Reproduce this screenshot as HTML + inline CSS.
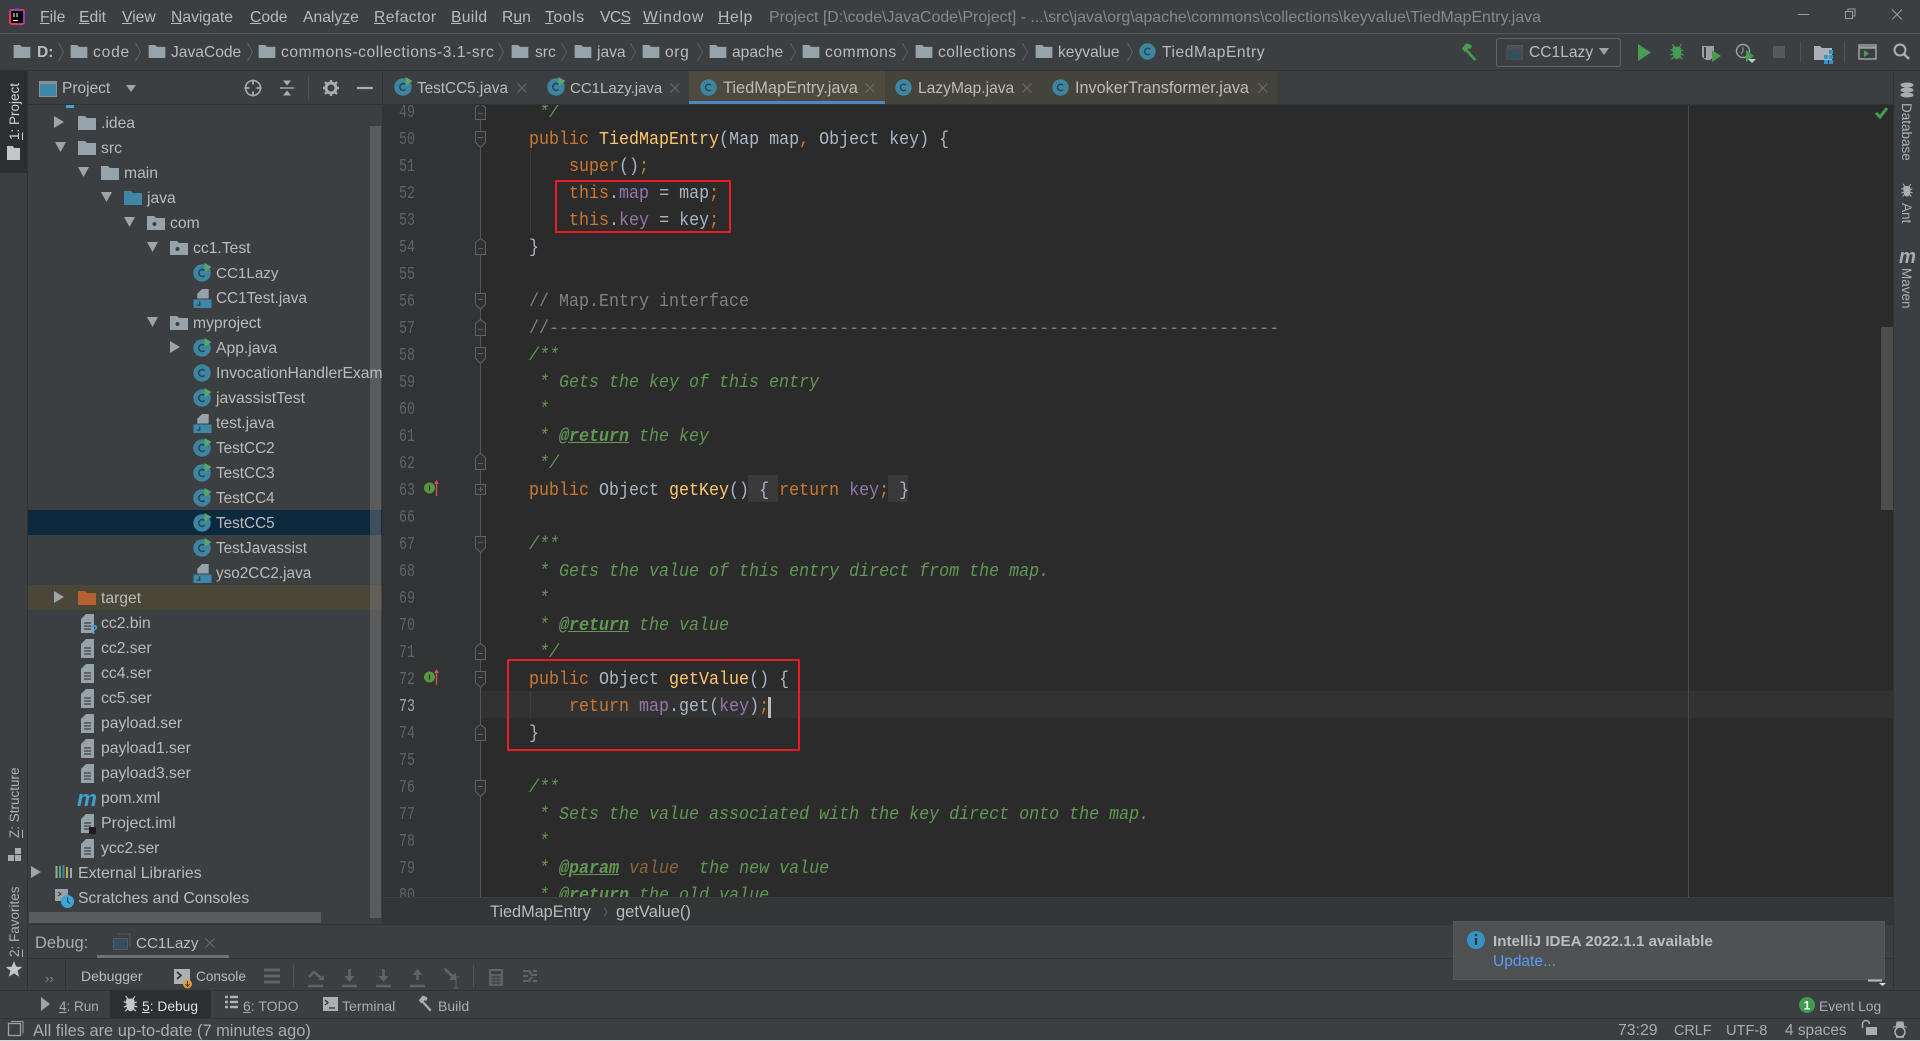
<!DOCTYPE html>
<html><head><meta charset="utf-8"><style>
html,body{margin:0;padding:0;width:1920px;height:1041px;overflow:hidden;background:#3c3f41}
body{position:relative;font-family:"Liberation Sans",sans-serif;color:#bbb}
.b{position:absolute}
.t{position:absolute;white-space:pre;font-size:15.7px;line-height:25px;height:25px;color:#bbb;margin-top:1px}
.m{top:4px;font-size:15.7px}
.n{top:39px;font-size:15.6px}
.tb{top:75px;font-size:15.3px}
.s{top:1018px;font-size:14.6px;line-height:24px;color:#a9adb0}
.u{text-decoration:underline}
.v{position:absolute;writing-mode:vertical-rl;transform:rotate(180deg);white-space:pre;font-size:13.5px;line-height:16px;color:#aeb0b2}
.r{writing-mode:vertical-rl;transform:none}
pre{margin:0;position:absolute;font-family:"Liberation Mono",monospace;font-size:18px;line-height:27px;white-space:pre;transform-origin:0 0}
.k{color:#cc7832}.f{color:#9876aa}.y{color:#ffc66d}.g{color:#808080}
.d{color:#629755;font-style:italic}.a{color:#629755;font-style:italic;font-weight:bold;text-decoration:underline}.pv{color:#8a653b;font-style:italic}
svg.o{position:absolute;left:0;top:0}
</style></head><body>
<svg width="0" height="0" style="position:absolute"><defs>
<symbol id="fo" viewBox="0 0 18 14"><path d="M0 0h7l2 2h9v12H0z" fill="#97a3ab"/></symbol>
<symbol id="fb" viewBox="0 0 18 14"><path d="M0 0h7l2 2h9v12H0z" fill="#3f87a6"/></symbol>
<symbol id="fr" viewBox="0 0 18 14"><path d="M0 0h7l2 2h9v12H0z" fill="#b5602f"/></symbol>
<symbol id="pk" viewBox="0 0 18 14"><path d="M0 0h7l2 2h9v12H0z" fill="#97a3ab"/><circle cx="7.5" cy="8" r="2" fill="#3c3f41"/></symbol>
<symbol id="cl" viewBox="0 0 18 18"><circle cx="9" cy="9" r="8.7" fill="#3e86a0"/><path d="M11.6 6.6A3.4 3.4 0 1 0 11.6 11.4" fill="none" stroke="#23485a" stroke-width="1.6"/></symbol>
<symbol id="cr" viewBox="0 0 19 19"><circle cx="9" cy="10" r="8.7" fill="#3e86a0"/><path d="M11.6 7.6A3.4 3.4 0 1 0 11.6 12.4" fill="none" stroke="#23485a" stroke-width="1.6"/><path d="M11.5 0l7 4-7 5z" fill="#59a869"/></symbol>
<symbol id="fj" viewBox="0 0 19 20"><path d="M9 0h7v10H4V5z" fill="#97a3ab"/><path d="M0 11h19v9H0z" fill="#3f87a6"/><path d="M6.5 13v4H3.5" stroke="#23485a" stroke-width="1.4" fill="none"/></symbol>
<symbol id="ft" viewBox="0 0 13 19"><path d="M5 0h8v19H0V5z" fill="#97a3ab"/><path d="M3 9h7M3 12h7M3 15h7" stroke="#3c3f41" stroke-width="1.2"/></symbol>
<symbol id="ar" viewBox="0 0 10 12"><path d="M0 0l10 6-10 6z" fill="#9ea4a8"/></symbol>
<symbol id="ad" viewBox="0 0 11 10"><path d="M0 0h11l-5.500 10z" fill="#9ea4a8"/></symbol>
<symbol id="x" viewBox="0 0 10 10"><path d="M.5.500l9 9M9.500.500l-9 9" stroke="#686b6e" stroke-width="1.100" fill="none"/></symbol>
<symbol id="ch" viewBox="0 0 6 20"><path d="M.5 1l5 9-5 9" stroke="#5c6063" stroke-width="1" fill="none"/></symbol>
<symbol id="ft1" viewBox="0 0 11 17"><path d="M.5 16.500V4.500L5.500.500l5 4v12z" stroke="#606366" fill="#2f3133"/><path d="M3 10.500h5" stroke="#606366"/></symbol>
<symbol id="ft2" viewBox="0 0 11 17"><path d="M.5.500h10v11l-5 5-5-5z" stroke="#606366" fill="#2f3133"/><path d="M3 6.500h5" stroke="#606366"/></symbol>
<symbol id="ft3" viewBox="0 0 11 11"><path d="M.5.500h10v10H.5z" stroke="#606366" fill="#2f3133"/><path d="M3 5.500h5M5.500 3v5" stroke="#606366"/></symbol>
<symbol id="ov" viewBox="0 0 16 18"><circle cx="5.500" cy="9" r="5.500" fill="#57963f"/><path d="M5.500 6.500v5" stroke="#2b2b2b" stroke-width="1.200"/><path d="M12.500 17V4" stroke="#c75450" stroke-width="1.300"/><path d="M10 5l2.500-4 2.500 4z" fill="#c75450"/></symbol>
<symbol id="ham" viewBox="0 0 20 20"><path d="M1 6L6 0l5 2 1 2-2 3-2-1-1 1 10 11-2 2L5 9 4 10z" fill="currentColor"/></symbol>
<symbol id="bug" viewBox="0 0 16 20"><path d="M3.500 1l2 3h5l2-3 1 .7-2 3 1 1.300v2l2.500-1v1.500L12.500 9.500v2L15.500 12.500V14l-3.200-1 -.3 2 2.500 2.500-1 1-2.200-2.200C10 17.500 9 18 8 18s-2-.5-3.300-1.700L2.500 18.500l-1-1L4 15l-.3-2L.5 14v-1.500l3-1v-2L.5 8V6.500L3 7.500v-2l1-1.300-2-3z" fill="currentColor"/></symbol>
</defs></svg>

<!-- structural backgrounds -->
<div class="b" style="left:0;top:33px;width:1920px;height:1px;background:#54585b"></div>
<div class="b" style="left:0;top:70px;width:1920px;height:1px;background:#323232"></div>
<div class="b" style="left:0;top:71px;width:28px;height:102px;background:#2c2e30"></div>
<div class="b" style="left:27px;top:71px;width:1px;height:919px;background:#323232"></div>
<div class="b" style="left:28px;top:104px;width:1865px;height:1px;background:#323232"></div>
<div class="b" style="left:382px;top:71px;width:1px;height:853px;background:#323232"></div>
<div class="b" style="left:28px;top:510px;width:354px;height:25px;background:#0d293e"></div>
<div class="b" style="left:28px;top:585px;width:354px;height:25px;background:#4a4638"></div>
<div class="b" style="left:66px;top:105px;width:8px;height:3px;background:#3fa5d4"></div>

<!-- tabs -->
<div class="b" style="left:689px;top:71px;width:196px;height:30px;background:#4e4a3e"></div>
<div class="b" style="left:689px;top:101px;width:196px;height:3px;background:#4a88c7"></div>
<div class="b" style="left:885px;top:71px;width:392px;height:33px;background:#45443c"></div>

<!-- editor -->
<div class="b" style="left:383px;top:105px;width:1510px;height:792px;background:#2b2b2b;overflow:hidden">
  <div class="b" style="left:0;top:0;width:97px;height:792px;background:#313335"></div>
  <div class="b" style="left:97px;top:586px;width:1413px;height:27px;background:#323232"></div>
  <div class="b" style="left:1305px;top:0;width:1px;height:792px;background:#4a4a4a"></div>
  <div class="b" style="left:97px;top:0;width:1px;height:792px;background:#555"></div>
  <div class="b" style="left:147px;top:45px;width:1px;height:83px;background:#3c3c3c"></div>
  <div class="b" style="left:147px;top:586px;width:1px;height:27px;background:#3c3c3c"></div>
  <div class="b" style="left:365px;top:370px;width:30px;height:27px;background:#3a3a3a"></div>
  <div class="b" style="left:505px;top:370px;width:20px;height:27px;background:#3a3a3a"></div>
  <div class="b" style="left:1498px;top:222px;width:12px;height:183px;background:#4d4d4d"></div>
  <pre style="left:16px;top:-5.5px;color:#606366;transform:scaleX(.74)">49
50
51
52
53
54
55
56
57
58
59
60
61
62
63
66
67
68
69
70
71
72
<span style="color:#a4a3a3">73</span>
74
75
76
77
78
79
80</pre>
  <pre style="left:146px;top:-5.5px;color:#a9b7c6;transform:scaleX(.926);width:1600px"><span class="d"> */</span>
<span class="k">public</span> <span class="y">TiedMapEntry</span>(Map map<span class="k">,</span> Object key) {
    <span class="k">super</span>()<span class="k">;</span>
    <span class="k">this</span>.<span class="f">map</span> = map<span class="k">;</span>
    <span class="k">this</span>.<span class="f">key</span> = key<span class="k">;</span>
}

<span class="g">// Map.Entry interface</span>
<span class="g">//-------------------------------------------------------------------------</span>
<span class="d">/**</span>
<span class="d"> * Gets the key of this entry</span>
<span class="d"> *</span>
<span class="d"> * </span><span class="a">@return</span><span class="d"> the key</span>
<span class="d"> */</span>
<span class="k">public</span> Object <span class="y">getKey</span>() { <span class="k">return</span> <span class="f">key</span><span class="k">;</span> }

<span class="d">/**</span>
<span class="d"> * Gets the value of this entry direct from the map.</span>
<span class="d"> *</span>
<span class="d"> * </span><span class="a">@return</span><span class="d"> the value</span>
<span class="d"> */</span>
<span class="k">public</span> Object <span class="y">getValue</span>() {
    <span class="k">return</span> <span class="f">map</span>.get(<span class="f">key</span>)<span class="k">;</span>
}

<span class="d">/**</span>
<span class="d"> * Sets the value associated with the key direct onto the map.</span>
<span class="d"> *</span>
<span class="d"> * </span><span class="a">@param</span> <span class="pv">value</span><span class="d">  the new value</span>
<span class="d"> * </span><span class="a">@return</span><span class="d"> the old value</span></pre>
  <div class="b" style="left:385px;top:592px;width:3px;height:21px;background:#bbb"></div>
  <svg class="o" width="1510" height="792" viewBox="383 105 1510 792" style="overflow:hidden">
    <use href="#ft1" x="475" y="103" width="11" height="17"/>
    <use href="#ft2" x="475" y="131" width="11" height="17"/>
    <use href="#ft1" x="475" y="238" width="11" height="17"/>
    <use href="#ft2" x="475" y="293" width="11" height="17"/>
    <use href="#ft1" x="475" y="319" width="11" height="17"/>
    <use href="#ft2" x="475" y="347" width="11" height="17"/>
    <use href="#ft1" x="475" y="453" width="11" height="17"/>
    <use href="#ft3" x="475" y="484" width="11" height="11"/>
    <use href="#ft2" x="475" y="536" width="11" height="17"/>
    <use href="#ft1" x="475" y="643" width="11" height="17"/>
    <use href="#ft2" x="475" y="671" width="11" height="17"/>
    <use href="#ft1" x="475" y="724" width="11" height="17"/>
    <use href="#ft2" x="475" y="780" width="11" height="17"/>
    <use href="#ov" x="424" y="479" width="16" height="18"/>
    <use href="#ov" x="424" y="668" width="16" height="18"/>
    <path d="M1876 113l4 4 7-9" stroke="#499c54" stroke-width="3" fill="none"/>
    <rect x="556" y="181" width="174" height="51" fill="none" stroke="#ed1c24" stroke-width="2"/>
    <rect x="508" y="660" width="291" height="90" fill="none" stroke="#ed1c24" stroke-width="2"/>
  </svg>
</div>

<!-- breadcrumb -->
<div class="b" style="left:383px;top:897px;width:1510px;height:27px;background:#333537;border-top:1px solid #3c3e40;box-sizing:border-box"></div>
<div class="b" style="left:28px;top:924px;width:1865px;height:1px;background:#323232"></div>

<!-- debug dividers -->
<div class="b" style="left:28px;top:958px;width:1865px;height:1px;background:#323232"></div>
<div class="b" style="left:97px;top:955px;width:132px;height:3px;background:#6c7074"></div>
<div class="b" style="left:0;top:990px;width:1920px;height:1px;background:#323232"></div>
<div class="b" style="left:110px;top:991px;width:101px;height:27px;background:#2c2e30"></div>
<div class="b" style="left:0;top:1018px;width:1920px;height:1px;background:#323232"></div>
<div class="b" style="left:0;top:1040px;width:1920px;height:1px;background:#d8d8d8"></div>
<div class="b" style="left:65px;top:959px;width:1px;height:31px;background:#323232"></div>
<div class="b" style="left:293px;top:965px;width:1px;height:22px;background:#515456"></div>
<div class="b" style="left:473px;top:965px;width:1px;height:22px;background:#515456"></div>
<div class="b" style="left:1893px;top:71px;width:1px;height:919px;background:#323232"></div>

<!-- scrollbars -->
<div class="b" style="left:370px;top:126px;width:11px;height:792px;background:rgba(130,132,134,.42)"></div>
<div class="b" style="left:29px;top:912px;width:292px;height:11px;background:#595b5d"></div>

<!-- menu -->
<span class="t m" style="left:40px"><span class="u">F</span>ile</span>
<span class="t m" style="left:79px"><span class="u">E</span>dit</span>
<span class="t m" style="left:122px"><span class="u">V</span>iew</span>
<span class="t m" style="left:171px"><span class="u">N</span>avigate</span>
<span class="t m" style="left:250px"><span class="u">C</span>ode</span>
<span class="t m" style="left:303px">Analy<span class="u">z</span>e</span>
<span class="t m" style="left:374px;letter-spacing:.4px"><span class="u">R</span>efactor</span>
<span class="t m" style="left:451px;letter-spacing:.3px"><span class="u">B</span>uild</span>
<span class="t m" style="left:502px">R<span class="u">u</span>n</span>
<span class="t m" style="left:545px;letter-spacing:.6px"><span class="u">T</span>ools</span>
<span class="t m" style="left:600px;letter-spacing:-.6px">VC<span class="u">S</span></span>
<span class="t m" style="left:643px;letter-spacing:.9px"><span class="u">W</span>indow</span>
<span class="t m" style="left:718px;letter-spacing:.7px"><span class="u">H</span>elp</span>
<span class="t m" style="left:769px;color:#858a8d;font-size:15.9px">Project [D:\code\JavaCode\Project] - ...\src\java\org\apache\commons\collections\keyvalue\TiedMapEntry.java</span>

<!-- nav -->
<span class="t n" style="left:37px;font-weight:bold">D:</span>
<span class="t n" style="left:93px;letter-spacing:.8px">code</span>
<span class="t n" style="left:171px">JavaCode</span>
<span class="t n" style="left:281px;letter-spacing:.55px">commons-collections-3.1-src</span>
<span class="t n" style="left:535px">src</span>
<span class="t n" style="left:597px">java</span>
<span class="t n" style="left:665px;letter-spacing:.6px">org</span>
<span class="t n" style="left:732px">apache</span>
<span class="t n" style="left:825px;letter-spacing:.6px">commons</span>
<span class="t n" style="left:938px;letter-spacing:.5px">collections</span>
<span class="t n" style="left:1058px">keyvalue</span>
<span class="t n" style="left:1162px;letter-spacing:.55px">TiedMapEntry</span>
<div class="b" style="left:1496px;top:38px;width:123px;height:27px;border:1px solid #646464;border-radius:3px;background:#3c3f41"></div>
<span class="t n" style="left:1529px">CC1Lazy</span>

<!-- project header -->
<span class="t" style="left:62px;top:75px;font-size:15.5px">Project</span>

<!-- tree -->
<span class="t" style="left:101px;top:110px">.idea</span>
<span class="t" style="left:101px;top:135px">src</span>
<span class="t" style="left:124px;top:160px">main</span>
<span class="t" style="left:147px;top:185px">java</span>
<span class="t" style="left:170px;top:210px">com</span>
<span class="t" style="left:193px;top:235px">cc1.Test</span>
<span class="t" style="left:216px;top:260px;font-size:15.200px">CC1Lazy</span>
<span class="t" style="left:216px;top:285px;font-size:15.300px">CC1Test.java</span>
<span class="t" style="left:193px;top:310px">myproject</span>
<span class="t" style="left:216px;top:335px">App.java</span>
<span class="t" style="left:216px;top:360px;width:166px;overflow:hidden">InvocationHandlerExample</span>
<span class="t" style="left:216px;top:385px">javassistTest</span>
<span class="t" style="left:216px;top:410px">test.java</span>
<span class="t" style="left:216px;top:435px;font-size:15.300px">TestCC2</span>
<span class="t" style="left:216px;top:460px;font-size:15.300px">TestCC3</span>
<span class="t" style="left:216px;top:485px;font-size:15.300px">TestCC4</span>
<span class="t" style="left:216px;top:510px;font-size:15.300px">TestCC5</span>
<span class="t" style="left:216px;top:535px;font-size:15.300px">TestJavassist</span>
<span class="t" style="left:216px;top:560px;font-size:15.300px">yso2CC2.java</span>
<span class="t" style="left:101px;top:585px">target</span>
<span class="t" style="left:101px;top:610px">cc2.bin</span>
<span class="t" style="left:101px;top:635px">cc2.ser</span>
<span class="t" style="left:101px;top:660px">cc4.ser</span>
<span class="t" style="left:101px;top:685px">cc5.ser</span>
<span class="t" style="left:101px;top:710px">payload.ser</span>
<span class="t" style="left:101px;top:735px">payload1.ser</span>
<span class="t" style="left:101px;top:760px">payload3.ser</span>
<span class="t" style="left:101px;top:785px">pom.xml</span>
<span class="t" style="left:101px;top:810px;font-size:16px">Project.iml</span>
<span class="t" style="left:101px;top:835px">ycc2.ser</span>
<span class="t" style="left:78px;top:860px;font-size:15.900px">External Libraries</span>
<span class="t" style="left:78px;top:885px;font-size:15.800px">Scratches and Consoles</span>

<!-- tabs text -->
<span class="t tb" style="left:417px">TestCC5.java</span>
<span class="t tb" style="left:570px;font-size:15px">CC1Lazy.java</span>
<span class="t tb" style="left:723px;font-size:16.400px">TiedMapEntry.java</span>
<span class="t tb" style="left:918px;font-size:15.600px">LazyMap.java</span>
<span class="t tb" style="left:1075px;font-size:16.200px">InvokerTransformer.java</span>

<!-- breadcrumb text -->
<span class="t" style="left:490px;top:899px;font-size:16.300px">TiedMapEntry</span>
<span class="t" style="left:616px;top:899px;font-size:16.500px">getValue()</span>

<!-- debug text -->
<span class="t" style="left:35px;top:930px;font-size:16.500px;color:#aaadb0">Debug:</span>
<span class="t" style="left:136px;top:930px;font-size:15.200px">CC1Lazy</span>
<span class="t" style="left:81px;top:963px;font-size:14px">Debugger</span>
<span class="t" style="left:196px;top:963px;font-size:13.600px">Console</span>
<span class="t" style="left:45px;top:965px;font-size:13px;color:#888">››</span>

<!-- bottom stripe -->
<span class="t" style="left:59px;top:993px;font-size:13.500px;color:#a9adb0"><span class="u">4</span>: Run</span>
<span class="t" style="left:142px;top:993px;font-size:13.800px;color:#dfe1e3"><span class="u">5</span>: Debug</span>
<span class="t" style="left:243px;top:993px;font-size:14px;color:#a9adb0"><span class="u">6</span>: TODO</span>
<span class="t" style="left:342px;top:993px;font-size:14.100px;color:#a9adb0">Terminal</span>
<span class="t" style="left:438px;top:993px;font-size:14px;color:#a9adb0">Build</span>
<span class="t" style="left:1819px;top:993px;font-size:13.800px;color:#a9adb0">Event Log</span>

<!-- status -->
<span class="t s" style="left:33px;font-size:16.400px">All files are up-to-date (7 minutes ago)</span>
<span class="t s" style="left:1618px;font-size:15.800px">73:29</span>
<span class="t s" style="left:1674px;font-size:14.400px">CRLF</span>
<span class="t s" style="left:1726px">UTF-8</span>
<span class="t s" style="left:1785px;font-size:15.400px">4 spaces</span>

<!-- stripes -->
<div class="v" style="left:7px;top:82px;height:58px;color:#d0d2d4"><span class="u">1</span>: Project</div>
<div class="v" style="left:7px;top:767px;height:71px"><span class="u">Z</span>: Structure</div>
<div class="v" style="left:7px;top:888px;height:69px"><span class="u">2</span>: Favorites</div>
<div class="v r" style="left:1898px;top:103px">Database</div>
<div class="v r" style="left:1898px;top:203px">Ant</div>
<div class="v r" style="left:1898px;top:268px">Maven</div>

<!-- notification -->
<div class="b" style="left:1453px;top:921px;width:432px;height:59px;background:#4f5153;border:1px solid #56585a;box-sizing:border-box"></div>
<span class="t" style="left:1493px;top:928px;font-size:15.200px;font-weight:bold;color:#bcbdbe">IntelliJ IDEA 2022.1.1 available</span>
<span class="t" style="left:1493px;top:948px;font-size:15.500px;color:#589df6">Update...</span>

<!-- icons -->
<svg class="o" width="1920" height="1041" viewBox="0 0 1920 1041">
  <!-- logo -->
  <rect x="9" y="9" width="16" height="16" rx="3" fill="#fe315d"/><path d="M9 12l8-4 8 5v9l-7 3z" fill="#5a4cd8" opacity=".8"/><rect x="11" y="11" width="12" height="12" fill="#000"/><path d="M13 20.500h5" stroke="#fff"/><path d="M14 13v4M17 13v4" stroke="#fff"/>
  <!-- window controls -->
  <path d="M1798 14.500h11" stroke="#9a9da0"/><path d="M1845.500 11.500h7v7h-7zM1848 11.500v-2.500h7v7h-2.500" fill="none" stroke="#9a9da0"/>
  <path d="M1892 9.500l10 10M1902 9.500l-10 10" stroke="#9a9da0"/>
  <!-- nav folders -->
  <use href="#fo" x="13" y="45" width="18" height="13"/><use href="#fo" x="70" y="45" width="18" height="13"/><use href="#fo" x="148" y="45" width="18" height="13"/><use href="#fo" x="258" y="45" width="18" height="13"/><use href="#fo" x="511" y="45" width="18" height="13"/><use href="#fo" x="574" y="45" width="18" height="13"/><use href="#fo" x="642" y="45" width="18" height="13"/><use href="#fo" x="709" y="45" width="18" height="13"/><use href="#fo" x="802" y="45" width="18" height="13"/><use href="#fo" x="915" y="45" width="18" height="13"/><use href="#fo" x="1035" y="45" width="18" height="13"/>
  <use href="#cl" x="1139" y="43" width="17" height="17"/>
  <use href="#ch" x="58" y="42" width="6" height="20"/><use href="#ch" x="135" y="42" width="6" height="20"/><use href="#ch" x="247" y="42" width="6" height="20"/><use href="#ch" x="498" y="42" width="6" height="20"/><use href="#ch" x="561" y="42" width="6" height="20"/><use href="#ch" x="630" y="42" width="6" height="20"/><use href="#ch" x="697" y="42" width="6" height="20"/><use href="#ch" x="790" y="42" width="6" height="20"/><use href="#ch" x="902" y="42" width="6" height="20"/><use href="#ch" x="1022" y="42" width="6" height="20"/><use href="#ch" x="1127" y="42" width="6" height="20"/>
  <!-- run toolbar -->
  <use href="#ham" x="1460" y="43" width="20" height="18" style="color:#499c54"/>
  <path d="M1507 45h16v15h-16z" fill="#4c5052"/><path d="M1506.500 49.500h15v10h-15z" fill="#34505e" stroke="#4b4e50"/><path d="M1510 45.500h12v3" stroke="#55585a" fill="none"/>
  <path d="M1599 48h10l-5 7z" fill="#9ea4a8"/>
  <path d="M1638 44l13 8.500-13 8.500z" fill="#499c54"/>
  <use href="#bug" x="1669" y="43" width="16" height="18" style="color:#499c54"/>
  <path d="M1702 46h12v11l-4 3h-4l-4-3z" fill="#9aa1a5"/><path d="M1705 47v11" stroke="#3c3f41" stroke-width="2"/><path d="M1712 50l9 6-9 6z" fill="#499c54"/>
  <circle cx="1743" cy="51" r="6.500" fill="none" stroke="#9aa1a5" stroke-width="1.400"/><path d="M1743 47v4l-2 3" stroke="#9aa1a5" fill="none"/><path d="M1746 50l8 6-8 6z" fill="#499c54"/><path d="M1748 59h8l-4 4z" fill="#ccc"/>
  <rect x="1773" y="46" width="12" height="12" fill="#56585a"/>
  <path d="M1800.500 41v22M1844.500 41v22" stroke="#4f5254"/>
  <path d="M1814 46h6l2 2h10v12h-18z" fill="#aab0b5"/><rect x="1824" y="55" width="4" height="4" fill="#3592c4"/><rect x="1829" y="55" width="4" height="4" fill="#3592c4"/><rect x="1829" y="50" width="4" height="4" fill="#3592c4"/><rect x="1824" y="60" width="4" height="4" fill="#3592c4"/><rect x="1829" y="60" width="4" height="4" fill="#3592c4"/>
  <rect x="1859" y="45" width="17" height="14" fill="none" stroke="#9aa1a5" stroke-width="1.500"/><path d="M1859 47.500h17" stroke="#9aa1a5" stroke-width="2.500"/><path d="M1864 50l5 3.500-5 3.500z" fill="#499c54"/>
  <circle cx="1900" cy="50" r="5.500" fill="none" stroke="#afb1b3" stroke-width="2"/><path d="M1904 54l5 5" stroke="#afb1b3" stroke-width="2.400"/>
  <!-- project header -->
  <rect x="39.500" y="81.500" width="17" height="15" fill="#3f87a6" stroke="#8a9196"/>
  <path d="M39 83h18" stroke="#8a9196" stroke-width="2"/>
  <path d="M126 85h10l-5 7z" fill="#9ea4a8"/>
  <circle cx="253" cy="88" r="7.500" fill="none" stroke="#a9adb0" stroke-width="1.600"/><path d="M253 79.500v5M253 91.500v5M244.500 88h5M256.500 88h5" stroke="#a9adb0" stroke-width="1.800"/>
  <path d="M280 88h14" stroke="#a9adb0" stroke-width="1.400"/><path d="M283 80.500h8l-4 5zM283 95.500h8l-4-5z" fill="#a9adb0"/>
  <path d="M308.500 76v24" stroke="#4f5254"/>
  <circle cx="331" cy="88" r="5" fill="none" stroke="#a9adb0" stroke-width="3"/><path d="M331 80v3M331 93v3M323 88h3M336 88h3M325 82l2 2M335 92l2 2M325 94l2-2M335 84l2-2" stroke="#a9adb0" stroke-width="2.400"/>
  <path d="M357 88h16" stroke="#a9adb0" stroke-width="2.200"/>
  <!-- tabs -->
  <use href="#cr" x="394" y="77" width="19" height="19"/><use href="#x" x="517" y="83" width="10" height="10"/>
  <use href="#cr" x="547" y="77" width="19" height="19"/><use href="#x" x="670" y="83" width="10" height="10"/>
  <use href="#cl" x="700" y="79" width="17" height="17"/><use href="#x" x="865" y="83" width="10" height="10"/>
  <use href="#cl" x="895" y="79" width="17" height="17"/><use href="#x" x="1022" y="83" width="10" height="10"/>
  <use href="#cl" x="1052" y="79" width="17" height="17"/><use href="#x" x="1258" y="83" width="10" height="10"/>
  <!-- tree icons -->
  <use href="#ar" x="54" y="116" width="10" height="12"/><use href="#fo" x="78" y="116" width="18" height="14"/>
  <use href="#ad" x="55" y="142" width="11" height="10"/><use href="#fo" x="78" y="141" width="18" height="14"/>
  <use href="#ad" x="78" y="167" width="11" height="10"/><use href="#fo" x="101" y="166" width="18" height="14"/>
  <use href="#ad" x="101" y="192" width="11" height="10"/><use href="#fb" x="124" y="191" width="18" height="14"/>
  <use href="#ad" x="124" y="217" width="11" height="10"/><use href="#pk" x="147" y="216" width="18" height="14"/>
  <use href="#ad" x="147" y="242" width="11" height="10"/><use href="#pk" x="170" y="241" width="18" height="14"/>
  <use href="#cr" x="193" y="263" width="19" height="19"/>
  <use href="#fj" x="193" y="289" width="19" height="19"/>
  <use href="#ad" x="147" y="317" width="11" height="10"/><use href="#pk" x="170" y="316" width="18" height="14"/>
  <use href="#ar" x="170" y="341" width="10" height="12"/><use href="#cr" x="193" y="338" width="19" height="19"/>
  <use href="#cl" x="193" y="364" width="18" height="18"/>
  <use href="#cr" x="193" y="388" width="19" height="19"/>
  <use href="#fj" x="193" y="414" width="19" height="19"/>
  <use href="#cr" x="193" y="438" width="19" height="19"/>
  <use href="#cr" x="193" y="463" width="19" height="19"/>
  <use href="#cr" x="193" y="488" width="19" height="19"/>
  <use href="#cr" x="193" y="513" width="19" height="19"/>
  <use href="#cr" x="193" y="538" width="19" height="19"/>
  <use href="#fj" x="193" y="564" width="19" height="19"/>
  <use href="#ar" x="54" y="591" width="10" height="12"/><use href="#fr" x="78" y="591" width="18" height="14"/>
  <use href="#ft" x="81" y="614" width="13" height="19"/><text x="90" y="634" font-family="Liberation Sans" font-size="13" font-weight="bold" fill="#3fa5d4">?</text>
  <use href="#ft" x="81" y="639" width="13" height="19"/>
  <use href="#ft" x="81" y="664" width="13" height="19"/>
  <use href="#ft" x="81" y="689" width="13" height="19"/>
  <use href="#ft" x="81" y="714" width="13" height="19"/>
  <use href="#ft" x="81" y="739" width="13" height="19"/>
  <use href="#ft" x="81" y="764" width="13" height="19"/>
  <text x="77" y="806" font-family="Liberation Sans" font-size="22" font-weight="bold" font-style="italic" fill="#3f9fcf" textLength="20" lengthAdjust="spacingAndGlyphs">m</text>
  <use href="#ft" x="81" y="814" width="13" height="19"/><rect x="89" y="827" width="7" height="7" fill="#1c1c1c"/>
  <use href="#ft" x="81" y="839" width="13" height="19"/>
  <use href="#ar" x="31" y="866" width="10" height="12"/>
  <path d="M56.500 866v12" stroke="#9aa7b0" stroke-width="2"/><path d="M60 866v12" stroke="#59a869" stroke-width="2"/><path d="M63.500 865v13" stroke="#3f87a6" stroke-width="2"/><path d="M67 867v11" stroke="#c9a64a" stroke-width="2"/><path d="M71 868v10" stroke="#9aa7b0" stroke-width="2"/>
  <rect x="55" y="889" width="13" height="12" fill="#97a3ab"/><path d="M58 892l3 2-3 2" stroke="#333" fill="none"/><circle cx="67.500" cy="901.500" r="6.500" fill="#3fa5d4"/><path d="M67.500 897.500v4l2.500 2" stroke="#20323c" fill="none"/>
  <!-- breadcrumb chevron -->
  <path d="M604 908l3 4-3 4" stroke="#66696c" fill="none"/>
  <!-- left stripe -->
  <path d="M7 146h6l1 2h6v12H7z" fill="#c4c6c8"/>
  <rect x="8" y="855" width="6" height="6" fill="#a9adb0"/><rect x="15" y="855" width="6" height="6" fill="#a9adb0"/><rect x="15" y="848" width="6" height="6" fill="#a9adb0"/>
  <path d="M14 961l2.200 5.600 6 .4-4.600 3.800 1.500 5.800-5.100-3.200-5.100 3.200 1.500-5.800L5.800 967l6-.4z" fill="#c4c6c8"/>
  <!-- right stripe -->
  <ellipse cx="1907" cy="85" rx="6.500" ry="2.500" fill="#a9adb0"/><ellipse cx="1907" cy="90" rx="6.500" ry="2.500" fill="#a9adb0"/><ellipse cx="1907" cy="95" rx="6.500" ry="2.500" fill="#a9adb0"/>
  <use href="#bug" x="1900" y="183" width="14" height="15" style="color:#a9adb0"/>
  <text x="1899" y="263" font-family="Liberation Sans" font-size="20" font-weight="bold" font-style="italic" fill="#a9adb0" textLength="17" lengthAdjust="spacingAndGlyphs">m</text>
  <!-- debug header -->
  <path d="M117 934h13v13" fill="none" stroke="#55585a"/><rect x="113.500" y="938.500" width="14" height="11" fill="#34505e" stroke="#565a5c"/>
  <use href="#x" x="205" y="938" width="10" height="10"/>
  <!-- debug toolbar -->
  <rect x="174" y="969" width="16" height="15" fill="#aab0b5"/><path d="M177 972l4 3.500-4 3.500" stroke="#2b2b2b" stroke-width="1.500" fill="none"/><circle cx="187.500" cy="984" r="4.500" fill="#e09a3c"/><path d="M187.500 981v5M185.500 984l2 2.500 2-2.500" stroke="#3c3f41" fill="none"/>
  <path d="M264 970h16M264 976h16M264 982h16" stroke="#5f6366" stroke-width="3"/>
  <g stroke="#5f6366" stroke-width="2.600" fill="none">
  <path d="M308 986h15M309 977l5-5 7 6"/><path d="M342 986h15M349.500 969v11"/><path d="M376 986h15M383.500 969v11"/><path d="M410 986h15M417.500 980v-10"/></g>
  <g fill="#5f6366"><path d="M318 980h6v-5z"/><path d="M344.500 976h10l-5 6z"/><path d="M378.500 976h10l-5 6z"/><path d="M412.500 975h10l-5-6z"/><path d="M444 968l3 1 6 6 3-2v7h-7l2-3-6-6z"/></g>
  <path d="M456 977v11M453 977h6M453 988h6" stroke="#5f6366" fill="none"/>
  <rect x="489" y="969" width="14" height="17" fill="#5f6366"/><rect x="491" y="971" width="10" height="3" fill="#3c3f41"/><path d="M491 977h10M491 980h10M491 983h10M494 976v9M498 976v9" stroke="#3c3f41"/>
  <path d="M523 971h6l3 4h5M523 976h5M523 981h6l3-4M533 981h4M533 971h4" stroke="#5f6366" stroke-width="2" fill="none"/>
  <!-- bottom stripe -->
  <path d="M41 997l9 7-9 7z" fill="#9ea4a8"/>
  <use href="#bug" x="123" y="995" width="15" height="18" style="color:#c4c6c8"/>
  <path d="M225 997h3M225 1002h3M225 1007h3M230 997h8M230 1002h8M230 1007h8" stroke="#afb1b3" stroke-width="2.400"/>
  <rect x="323" y="997" width="15" height="14" fill="#aab0b5"/><path d="M325 1000l3 2.500-3 2.500M329 1008h6" stroke="#2b2b2b" fill="none" stroke-width="1.200"/>
  <use href="#ham" x="418" y="995" width="16" height="17" style="color:#a9adb0"/>
  <!-- event log -->
  <circle cx="1807" cy="1005" r="8" fill="#3f9b50"/><text x="1807" y="1009.500" text-anchor="middle" font-family="Liberation Sans" font-size="12" font-weight="bold" fill="#fff">1</text>
  <!-- status -->
  <rect x="8.500" y="1023.500" width="12" height="12" fill="none" stroke="#9aa1a5" stroke-width="1.300"/><path d="M11 1021.500h12v12" stroke="#9aa1a5" fill="none"/>
  <path d="M1862.500 1028v-4a3.500 3.500 0 0 1 7 0" stroke="#a9adb0" stroke-width="1.500" fill="none"/><rect x="1866" y="1027" width="11" height="8" fill="#a9adb0"/>
  <path d="M1893 1027h14M1896 1027l1-5h6l1 5" fill="#a9adb0" stroke="#a9adb0"/><circle cx="1900" cy="1032" r="5" fill="none" stroke="#a9adb0" stroke-width="1.500"/><path d="M1896 1037h8" stroke="#a9adb0" stroke-width="1.500"/>
  <!-- notification icon -->
  <circle cx="1476" cy="940" r="9" fill="#3592c4"/><path d="M1476 938v7" stroke="#2e3133" stroke-width="2.200"/><circle cx="1476" cy="935" r="1.300" fill="#2e3133"/>
  <path d="M1868 980.500h14" stroke="#bbb" stroke-width="2"/><path d="M1879 983h7l-3.500 3z" fill="#ddd"/>
</svg>
</body></html>
